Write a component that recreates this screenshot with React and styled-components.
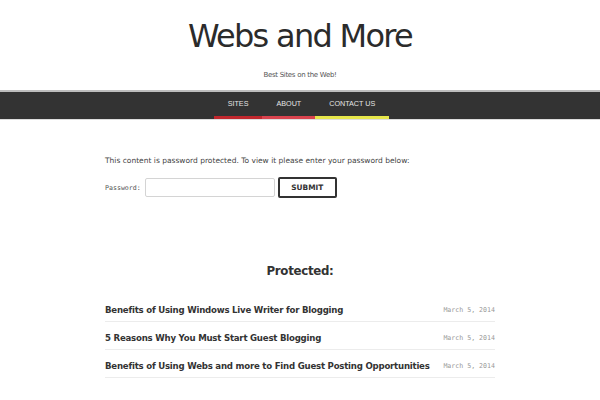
import React from 'react';
import styled, { createGlobalStyle } from 'styled-components';

const GlobalStyle = createGlobalStyle`
  html, body {
    margin: 0;
    padding: 0;
    background: #fff;
  }
  body {
    font-family: 'DejaVu Sans', sans-serif;
    color: #333;
  }
`;

const Header = styled.header`
  text-align: center;
  padding-top: 14px;
  h1 {
    margin: 0;
    font-family: 'DejaVu Sans', sans-serif;
    font-weight: normal;
    font-size: 32px;
    line-height: 44px;
    color: #2b2b2b;
    letter-spacing: -1.7px;
  }
  p {
    margin: 12px 0 0;
    font-size: 7px;
    line-height: 10px;
    color: #555;
    letter-spacing: -0.3px;
  }
`;

const Nav = styled.nav`
  margin-top: 10px;
  border-top: 2px solid #bdbdbd;
  background: #333;
  border-bottom: 1px solid #ddd;
  ul {
    list-style: none;
    margin: 0;
    padding: 0 0 0 3px;
    display: flex;
    justify-content: center;
  }
`;

const NavItem = styled.li`
  padding: 0 14px;
  height: 24px;
  line-height: 24px;
  border-bottom: 3px solid ${(p) => p.$accent};
  font-family: 'Liberation Sans', Arial, sans-serif;
  font-size: 7.2px;
  color: #e4e4e4;
  text-transform: uppercase;
`;

const Content = styled.main`
  width: 390px;
  margin: 0 auto;
  padding-top: 36px;
`;

const Notice = styled.p`
  margin: 0;
  font-size: 7.5px;
  line-height: 10px;
  color: #444;
`;

const PasswordForm = styled.form`
  display: flex;
  align-items: center;
  margin-top: 11px;
  label {
    font-family: 'DejaVu Sans Mono', monospace;
    font-size: 6.6px;
    color: #555;
    margin-right: 4px;
  }
  input {
    box-sizing: border-box;
    width: 130px;
    height: 19px;
    border: 1px solid #d4d4d4;
    border-radius: 2px;
    margin: 0 3px 0 0;
    padding: 0;
  }
`;

const SubmitButton = styled.button`
  box-sizing: border-box;
  width: 59px;
  height: 21px;
  border: 2px solid #333;
  border-radius: 2px;
  background: #fff;
  font-family: 'DejaVu Sans', sans-serif;
  font-weight: bold;
  font-size: 7.4px;
  color: #333;
  padding: 0;
`;

const SectionTitle = styled.h2`
  margin: 64px 0 0;
  text-align: center;
  font-size: 11.8px;
  line-height: 18px;
  font-weight: bold;
  color: #333;
  letter-spacing: -0.3px;
`;

const PostList = styled.ul`
  list-style: none;
  margin: 14px 0 0;
  padding: 0;
`;

const PostRow = styled.li`
  display: flex;
  justify-content: space-between;
  align-items: center;
  height: 22px;
  padding-top: 5px;
  border-bottom: 1px solid #ececec;
`;

const PostTitle = styled.a`
  font-size: 8.6px;
  font-weight: bold;
  color: #333;
  text-decoration: none;
  letter-spacing: -0.22px;
`;

const PostDate = styled.span`
  font-family: 'DejaVu Sans Mono', monospace;
  font-size: 6.6px;
  color: #999;
`;

const navItems = [
  { label: 'Sites', accent: '#c1272d' },
  { label: 'About', accent: '#d9434e' },
  { label: 'Contact us', accent: '#e6e64a' },
];

const posts = [
  'Benefits of Using Windows Live Writer for Blogging',
  '5 Reasons Why You Must Start Guest Blogging',
  'Benefits of Using Webs and more to Find Guest Posting Opportunities',
];

export default function App() {
  return (
    <>
      <GlobalStyle />
      <Header>
        <h1>Webs and More</h1>
        <p>Best Sites on the Web!</p>
      </Header>
      <Nav>
        <ul>
          {navItems.map((item) => (
            <NavItem key={item.label} $accent={item.accent}>
              {item.label}
            </NavItem>
          ))}
        </ul>
      </Nav>
      <Content>
        <Notice>
          This content is password protected. To view it please enter your password below:
        </Notice>
        <PasswordForm onSubmit={(e) => e.preventDefault()}>
          <label htmlFor="pwd">Password:</label>
          <input id="pwd" type="password" />
          <SubmitButton type="submit">SUBMIT</SubmitButton>
        </PasswordForm>
        <SectionTitle>Protected:</SectionTitle>
        <PostList>
          {posts.map((title) => (
            <PostRow key={title}>
              <PostTitle href="#">{title}</PostTitle>
              <PostDate>March 5, 2014</PostDate>
            </PostRow>
          ))}
        </PostList>
      </Content>
    </>
  );
}
